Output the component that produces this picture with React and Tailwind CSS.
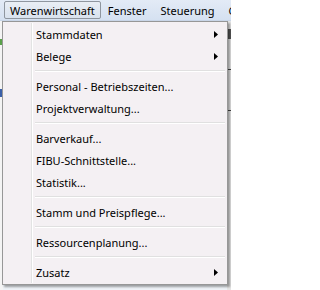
const font = { fontFamily: '"Noto Sans", "Open Sans", sans-serif' }

const items = [
  { label: "Stammdaten", sub: true },
  { label: "Belege", sub: true },
  "sep",
  { label: "Personal - Betriebszeiten..." },
  { label: "Projektverwaltung..." },
  "sep",
  { label: "Barverkauf..." },
  { label: "FIBU-Schnittstelle..." },
  { label: "Statistik..." },
  "sep",
  { label: "Stamm und Preispflege..." },
  "sep",
  { label: "Ressourcenplanung..." },
  "sep",
  { label: "Zusatz", sub: true },
]

function Arrow() {
  return (
    <svg width="4" height="7" viewBox="0 0 4 7" className="block">
      <path d="M0 0 L4 3.5 L0 7 Z" fill="#000" />
    </svg>
  )
}

export default function App() {
  return (
    <div className="relative w-[231px] h-[290px] overflow-hidden bg-[#eef2f7] text-[11px] text-black" style={font}>
      {/* menu bar */}
      <div className="h-[21px] flex items-center pl-[4px] whitespace-nowrap overflow-hidden bg-gradient-to-b from-[#e3ebf6] to-[#d5e1f1] border-b border-[#c9d6e8]">
        <div className="h-[18px] px-[5px] flex items-center rounded-[2px] border border-[#8f969f] bg-gradient-to-b from-[#e9eef5] to-[#d9e2ee] leading-none">
          Warenwirtschaft
        </div>
        <div className="pl-[7px] pr-[7px] leading-none">Fenster</div>
        <div className="pl-[7px] pr-[7px] leading-none">Steuerung</div>
        <div className="pl-[7px] leading-none">Gerät</div>
      </div>

      {/* app content behind */}
      <div className="absolute left-0 top-[21px] w-[3px] h-[269px] bg-[#f4f4f4]">
        <div className="mt-[18px] h-[6px] bg-[#5aa04a]" />
        <div className="mt-[44px] h-[8px] bg-[#3b5fa8]" />
      </div>
      <div className="absolute right-0 top-[21px] w-[4px] h-[269px] bg-[#e6e6e6]">
        <div className="mt-[8px] h-[10px] bg-[#555]" />
        <div className="mt-[30px] h-[1px] bg-[#444]" />
        <div className="mt-[40px] h-[1px] bg-[#444]" />
      </div>

      {/* dropdown */}
      <div className="absolute left-[2px] top-[21px] w-[226px] border border-[#979797] bg-[#f4f0f3] py-[1px] shadow-[2px_2px_2px_rgba(0,0,0,0.35)]">
        <div className="absolute left-[28px] top-[1px] bottom-[1px] w-[2px] border-l border-[#e2e3e3] border-r border-r-white" />
        {items.map((it, i) =>
          it === "sep" ? (
            <div key={i} className="h-[8px] flex flex-col justify-center pl-[32px] pr-[2px]">
              <div className="h-[1px] bg-[#e0e0e0]" />
              <div className="h-[1px] bg-white" />
            </div>
          ) : (
            <div key={i} className="h-[22px] flex items-center pl-[33px] pr-[9px]">
              <span className="flex-1 leading-none">{it.label}</span>
              {it.sub && <Arrow />}
            </div>
          )
        )}
      </div>
    </div>
  )
}
